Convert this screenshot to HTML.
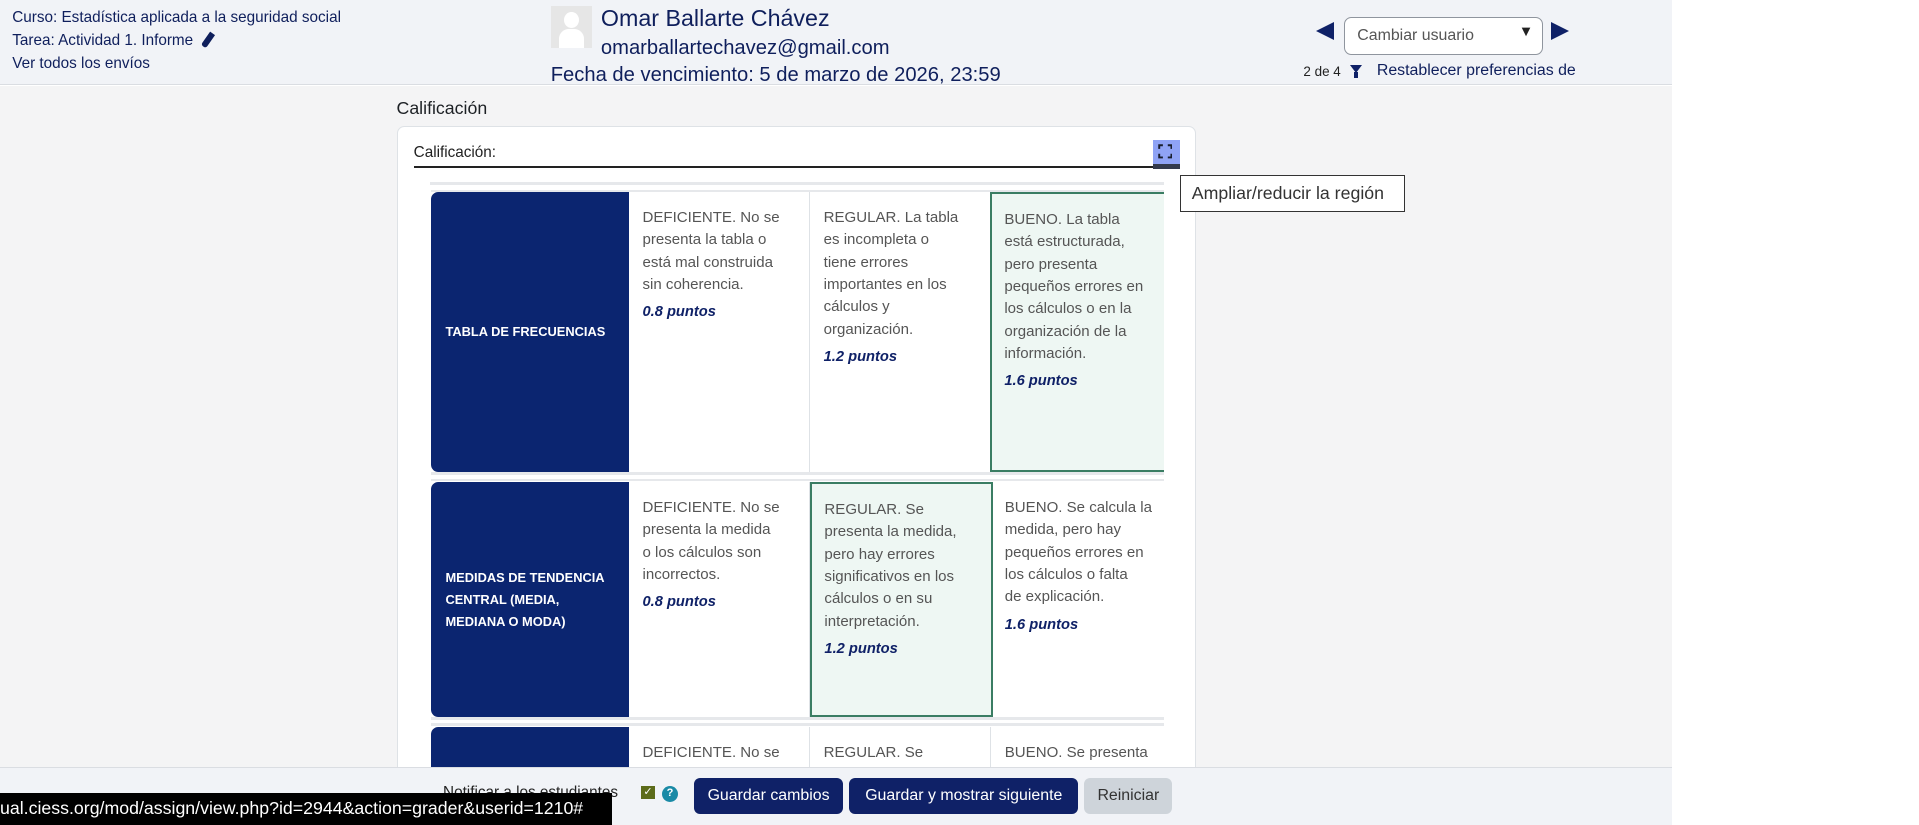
<!DOCTYPE html>
<html><head><meta charset="utf-8"><style>
html,body{margin:0;padding:0;width:1919px;height:825px;overflow:hidden;background:#fff;font-family:"Liberation Sans",sans-serif;}
#w{zoom:1.22385;position:relative;width:1568px;height:674px;}
.a{position:absolute;white-space:nowrap;}
.nav{color:#0f1f5c}
.cell{position:absolute;box-sizing:border-box;padding:12px 11px;font-size:12.3px;line-height:18.3px;color:#555;white-space:nowrap;background:#fff;border-right:1px solid #dee2e6;}
.cell b{display:block;margin-top:4px;color:#0f2167;font-style:italic;font-size:12px;}
.sel{background:#eef7f3;border:2px solid #3a7d63;z-index:2;}
.hd{position:absolute;left:352px;width:162px;background:#0b2570;border-radius:6px 0 0 6px;color:#fff;font-weight:bold;font-size:10.5px;line-height:18px;box-sizing:border-box;padding-left:12px;display:flex;align-items:center;}
.btn{position:absolute;top:636px;height:29px;border-radius:5px;background:#0f2167;color:#fff;font-size:13px;line-height:29px;text-align:center;}
</style></head><body><div id="w">
<div class="a" style="left:0;top:0;width:1366px;height:69px;background:#f1f3f7;border-bottom:1px solid #dadde2"></div>
<div class="a" style="left:0;top:70px;width:1366px;height:604px;background:#f4f4f5"></div>
<div class="a nav" style="left:10px;top:6px;font-size:12.5px;line-height:18.5px">Curso: Estadística aplicada a la seguridad social<br>Tarea: Actividad 1. Informe <span style="display:inline-block;width:5px;height:13px;background:#0f1f5c;transform:rotate(35deg);vertical-align:-2px;margin-left:6px;border-radius:0 0 2px 2px"></span><br>Ver todos los envíos</div>
<div class="a" style="left:450px;top:5px;width:34px;height:34px;background:#e6e6e6;overflow:hidden"><div style="position:absolute;left:11px;top:5px;width:12px;height:13px;border-radius:50%;background:#fff"></div><div style="position:absolute;left:7px;top:19px;width:20px;height:20px;border-radius:8px 8px 0 0;background:#fff"></div></div>
<div class="a nav" style="left:491px;top:4px;font-size:19px">Omar Ballarte Chávez</div>
<div class="a nav" style="left:491px;top:30px;font-size:16.5px">omarballartechavez@gmail.com</div>
<div class="a nav" style="left:450px;top:52px;font-size:16.5px">Fecha de vencimiento: 5 de marzo de 2026, 23:59</div>
<div class="a" style="left:1075px;top:18px;width:0;height:0;border-top:8px solid transparent;border-bottom:8px solid transparent;border-right:15px solid #0f2167"></div>
<div class="a" style="left:1098px;top:14px;width:161px;height:29px;border:1px solid #8f959e;border-radius:6px;background:#fff"></div>
<div class="a" style="left:1109px;top:22px;font-size:13px;color:#555">Cambiar usuario</div>
<div class="a" style="left:1241px;top:20px;font-size:12px;color:#222">▼</div>
<div class="a" style="left:1267px;top:18px;width:0;height:0;border-top:8px solid transparent;border-bottom:8px solid transparent;border-left:15px solid #0f2167"></div>
<div class="a" style="left:1065px;top:52px;font-size:11px;color:#222">2 de 4</div>
<div class="a" style="left:1103px;top:53px;width:0;height:0;border-left:5px solid transparent;border-right:5px solid transparent;border-top:7px solid #0f2167"></div>
<div class="a" style="left:1106px;top:59px;width:4px;height:5px;background:#0f2167"></div>
<div class="a nav" style="left:1125px;top:51px;font-size:13px">Restablecer preferencias de</div>

<div class="a" style="left:324px;top:80px;font-size:14.5px;color:#1d2125">Calificación</div>
<div class="a" style="left:324px;top:103px;width:653px;height:560px;background:#fff;border:1px solid #dee2e6;border-radius:6px;box-sizing:border-box"></div>
<div class="a" style="left:338px;top:118px;font-size:12.5px;color:#222">Calificación:</div>
<div class="a" style="left:338px;top:136px;width:604px;height:1px;background:#222"></div>
<div class="a" style="left:942px;top:114px;width:22px;height:20px;background:#8fa3f5"></div>
<div class="a" style="left:942px;top:134px;width:22px;height:4px;background:#333a4d"></div>
<svg class="a" style="left:946px;top:118px" width="12" height="12" viewBox="0 0 12 12" fill="none" stroke="#1a1f2e" stroke-width="1.6"><path d="M1 4V1h3M8 1h3v3M11 8v3H8M4 11H1V8"/></svg>
<div class="a" style="left:964px;top:143px;width:184px;height:30px;background:#fff;border:1px solid #333;box-sizing:border-box;font-size:14.5px;line-height:28px;padding-left:9px;color:#333">Ampliar/reducir la región</div>
<div class="a" style="left:351px;top:149px;width:600px;height:2px;background:#e6e8eb"></div>

<div class="a" style="left:352px;top:155px;width:599px;height:2px;background:#e6e8eb"></div>
<div class="hd" style="top:157px;height:229px">TABLA DE FRECUENCIAS</div>
<div class="cell" style="left:514px;top:157px;width:148px;height:229px">DEFICIENTE. No se<br>presenta la tabla o<br>está mal construida<br>sin coherencia.<b>0.8 puntos</b></div>
<div class="cell" style="left:662px;top:157px;width:148px;height:229px">REGULAR. La tabla<br>es incompleta o<br>tiene errores<br>importantes en los<br>cálculos y<br>organización.<b>1.2 puntos</b></div>
<div class="cell sel" style="left:809px;top:157px;width:142px;height:229px;border-right:none;padding-left:10px">BUENO. La tabla<br>está estructurada,<br>pero presenta<br>pequeños errores en<br>los cálculos o en la<br>organización de la<br>información.<b>1.6 puntos</b></div>
<div class="a" style="left:352px;top:386px;width:599px;height:2px;background:#e6e8eb"></div>

<div class="a" style="left:352px;top:391px;width:599px;height:2px;background:#e6e8eb"></div>
<div class="hd" style="top:394px;height:192px">MEDIDAS DE TENDENCIA<br>CENTRAL (MEDIA,<br>MEDIANA O MODA)</div>
<div class="cell" style="left:514px;top:394px;width:148px;height:192px">DEFICIENTE. No se<br>presenta la medida<br>o los cálculos son<br>incorrectos.<b>0.8 puntos</b></div>
<div class="cell" style="left:810px;top:394px;width:141px;height:192px;border-right:none">BUENO. Se calcula la<br>medida, pero hay<br>pequeños errores en<br>los cálculos o falta<br>de explicación.<b>1.6 puntos</b></div>
<div class="cell sel" style="left:662px;top:394px;width:149px;height:192px;padding-left:10px">REGULAR. Se<br>presenta la medida,<br>pero hay errores<br>significativos en los<br>cálculos o en su<br>interpretación.<b>1.2 puntos</b></div>
<div class="a" style="left:352px;top:586px;width:599px;height:2px;background:#e6e8eb"></div>

<div class="a" style="left:352px;top:591px;width:599px;height:2px;background:#e6e8eb"></div>
<div class="hd" style="top:594px;height:40px"></div>
<div class="cell" style="left:514px;top:594px;width:148px;height:40px">DEFICIENTE. No se</div>
<div class="cell" style="left:662px;top:594px;width:148px;height:40px">REGULAR. Se</div>
<div class="cell" style="left:810px;top:594px;width:141px;height:40px;border-right:none">BUENO. Se presenta</div>

<div class="a" style="left:0;top:627px;width:1366px;height:47px;background:#f1f3f7;border-top:1px solid #dadde2;z-index:3"></div>
<div class="a" style="left:362px;top:641px;font-size:12.5px;color:#222;z-index:4">Notificar a los estudiantes</div>
<div class="a" style="left:524px;top:642px;width:11px;height:11px;background:#5c6b1a;color:#fff;font-size:9px;line-height:11px;text-align:center;z-index:4">✓</div>
<div class="a" style="left:541px;top:642px;width:13px;height:13px;border-radius:50%;background:#1a8aa6;color:#fff;font-size:9px;line-height:13px;text-align:center;font-weight:bold;z-index:4">?</div>
<div class="btn" style="left:567px;width:122px;z-index:4">Guardar cambios</div>
<div class="btn" style="left:694px;width:187px;z-index:4">Guardar y mostrar siguiente</div>
<div class="btn" style="left:886px;width:72px;background:#ced4da;color:#333;z-index:4">Reiniciar</div>
<div class="a" style="left:0;top:648px;width:500px;height:26px;background:#000;color:#fff;font-size:14.5px;line-height:26px;overflow:hidden;z-index:5">ual.ciess.org/mod/assign/view.php?id=2944&amp;action=grader&amp;userid=1210#</div>
</div></body></html>
